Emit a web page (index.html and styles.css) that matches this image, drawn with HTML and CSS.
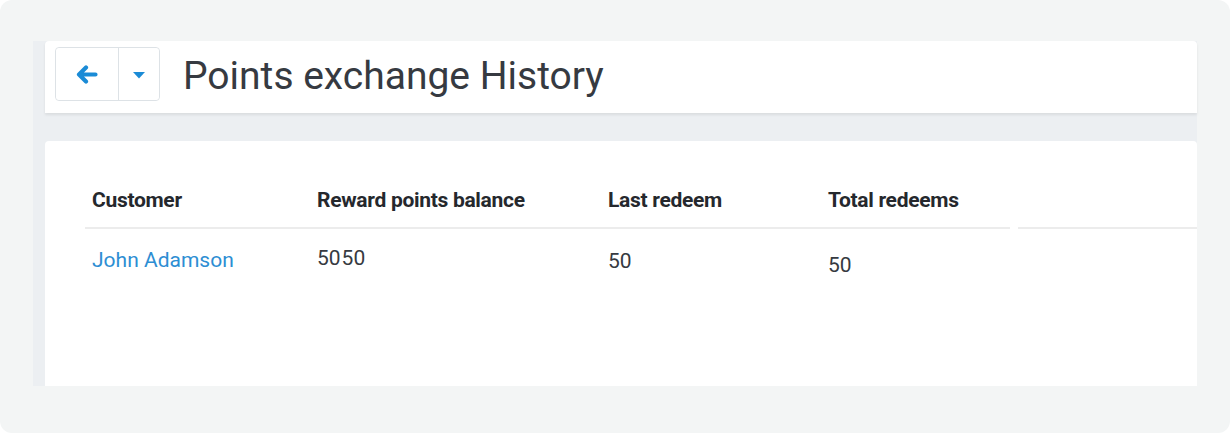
FILE: index.html
```html
<!DOCTYPE html>
<html lang="en">
<head>
<meta charset="utf-8">
<title>Points exchange History</title>
<link rel="stylesheet" href="styles.css">
</head>
<body>
<div class="frame">
  <div class="app">
    <header class="toolbar">
      <div class="btn-group">
        <button class="btn btn-back" aria-label="Back">
          <svg width="22" height="19" viewBox="0 0 22 19"><path d="M10 2.5 L3 9.5 L10 16.5 M3.5 9.5 H19.5" fill="none" stroke="#1b8bd6" stroke-width="4.2" stroke-linecap="round" stroke-linejoin="round"/></svg>
        </button>
        <button class="btn btn-caret" aria-label="More">
          <svg width="12" height="7" viewBox="0 0 12 7"><path d="M0 0 H12 L6 6.5 Z" fill="#1b8bd6"/></svg>
        </button>
      </div>
      <h1 class="title">Points exchange History</h1>
    </header>
    <section class="card">
      <div class="grid">
        <div class="row head">
          <div class="cell">Customer</div>
          <div class="cell">Reward points balance</div>
          <div class="cell">Last redeem</div>
          <div class="cell">Total redeems</div>
          <div class="cell"></div>
        </div>
        <div class="row body">
          <div class="cell c-name"><a href="#">John Adamson</a></div>
          <div class="cell c-bal">50<span class="sp">50</span></div>
          <div class="cell c-last">50</div>
          <div class="cell c-total">50</div>
          <div class="cell"></div>
        </div>
      </div>
    </section>
  </div>
</div>
</body>
</html>
```

FILE: styles.css
```css
html, body {
  margin: 0;
  padding: 0;
  background: #ffffff;
}

.frame {
  width: 1230px;
  height: 433px;
  box-sizing: border-box;
  background: #f3f5f5;
  border-radius: 12px;
  padding: 41px 33px 47px 33px;
  font-family: Roboto, "Noto Sans", sans-serif;
  color: #363a41;
}

.app {
  height: 100%;
  background: #eceff2;
  padding-left: 12px;
  display: flex;
  flex-direction: column;
  gap: 28px;
}

.toolbar {
  height: 72px;
  box-sizing: border-box;
  background: #ffffff;
  border-radius: 4px 4px 0 0;
  box-shadow: 0 2px 3px rgba(0, 0, 0, 0.08);
  display: flex;
  align-items: flex-start;
  padding: 6px 10px 0 10px;
  gap: 23px;
}

.btn-group {
  display: flex;
  height: 54px;
  border: 1px solid #dde2e6;
  border-radius: 4px;
  box-sizing: border-box;
}

.btn {
  background: #ffffff;
  border: 0;
  padding: 0;
  display: flex;
  align-items: center;
  justify-content: center;
  border-radius: 4px;
}

.btn-back {
  width: 63px;
  border-right: 1px solid #dde2e6;
  border-radius: 4px 0 0 4px;
}

.btn-caret {
  width: 40px;
  border-radius: 0 4px 4px 0;
  padding-top: 2px;
}

.title {
  margin: 0;
  font-weight: 400;
  font-size: 39px;
  line-height: 50px;
  color: #363a41;
  padding-top: 4px;
}

.card {
  flex: 1;
  background: #ffffff;
  border-radius: 4px 4px 0 0;
  padding: 47px 0 0 40px;
}

.row {
  display: grid;
  grid-template-columns: 225px 291px 220px 189px 1fr;
}

.cell {
  padding-left: 7px;
  font-size: 21px;
  line-height: 24px;
}

.head .cell {
  font-weight: 700;
  color: #25282d;
  padding-bottom: 17px;
  letter-spacing: -0.3px;
}

.head {
  background: linear-gradient(90deg, #ececec 0, #ececec 925px, transparent 925px, transparent 933px, #ececec 933px) left bottom / 100% 2px no-repeat;
}

.body .cell {
  padding-top: 19px;
  color: #363a41;
}

.c-name a {
  color: #2d8ed3;
  text-decoration: none;
}

.body .c-bal { padding-top: 17px; }
.body .c-last { padding-top: 20px; }
.body .c-total { padding-top: 24px; }

.sp { margin-left: 1px; }
```
